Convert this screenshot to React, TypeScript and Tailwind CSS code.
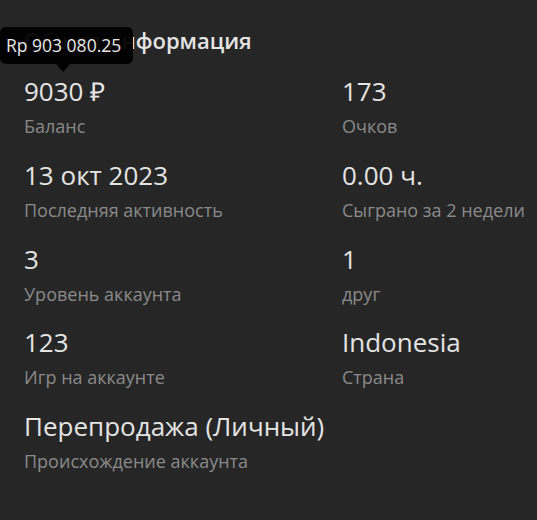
const stats: { value: string; label: string }[] = [
  { value: "9030 ₽", label: "Баланс" },
  { value: "173", label: "Очков" },
  { value: "13 окт 2023", label: "Последняя активность" },
  { value: "0.00 ч.", label: "Сыграно за 2 недели" },
  { value: "3", label: "Уровень аккаунта" },
  { value: "1", label: "друг" },
  { value: "123", label: "Игр на аккаунте" },
  { value: "Indonesia", label: "Страна" },
  { value: "Перепродажа (Личный)", label: "Происхождение аккаунта" },
];

function Stat({ value, label, tip }: { value: string; label: string; tip?: string }) {
  return (
    <div className="relative flex flex-col">
      {tip && (
        <div className="absolute -top-[48px] left-[-24px] z-10">
          <div className="rounded-md bg-black/95 pl-[6px] pr-[12px] py-[7px] text-[17.5px] leading-[23px] whitespace-nowrap text-[#e8e8e8]">
            {tip}
          </div>
          <div className="ml-[56px] h-0 w-0 border-x-[7px] border-t-[8px] border-x-transparent border-t-black/95" />
        </div>
      )}
      <span className="text-[26px] leading-8 text-[#e4e4e4]">{value}</span>
      <span className="mt-[7px] text-[18px] leading-6 text-[#8a8a8a]">{label}</span>
    </div>
  );
}

export default function App() {
  return (
    <div
      className="h-[520px] w-[537px] bg-[#262626] pl-6 pt-[26px]"
      style={{ fontFamily: '"Open Sans", sans-serif' }}
    >
      <h2 className="text-[22px] leading-7 font-semibold text-[#e4e4e4]">Общая информация</h2>
      <div className="mt-[21px] grid grid-cols-[318px_1fr] gap-y-[20.75px]">
        {stats.map((s, i) => (
          <Stat key={s.label} value={s.value} label={s.label} tip={i === 0 ? "Rp 903 080.25" : undefined} />
        ))}
      </div>
    </div>
  );
}
